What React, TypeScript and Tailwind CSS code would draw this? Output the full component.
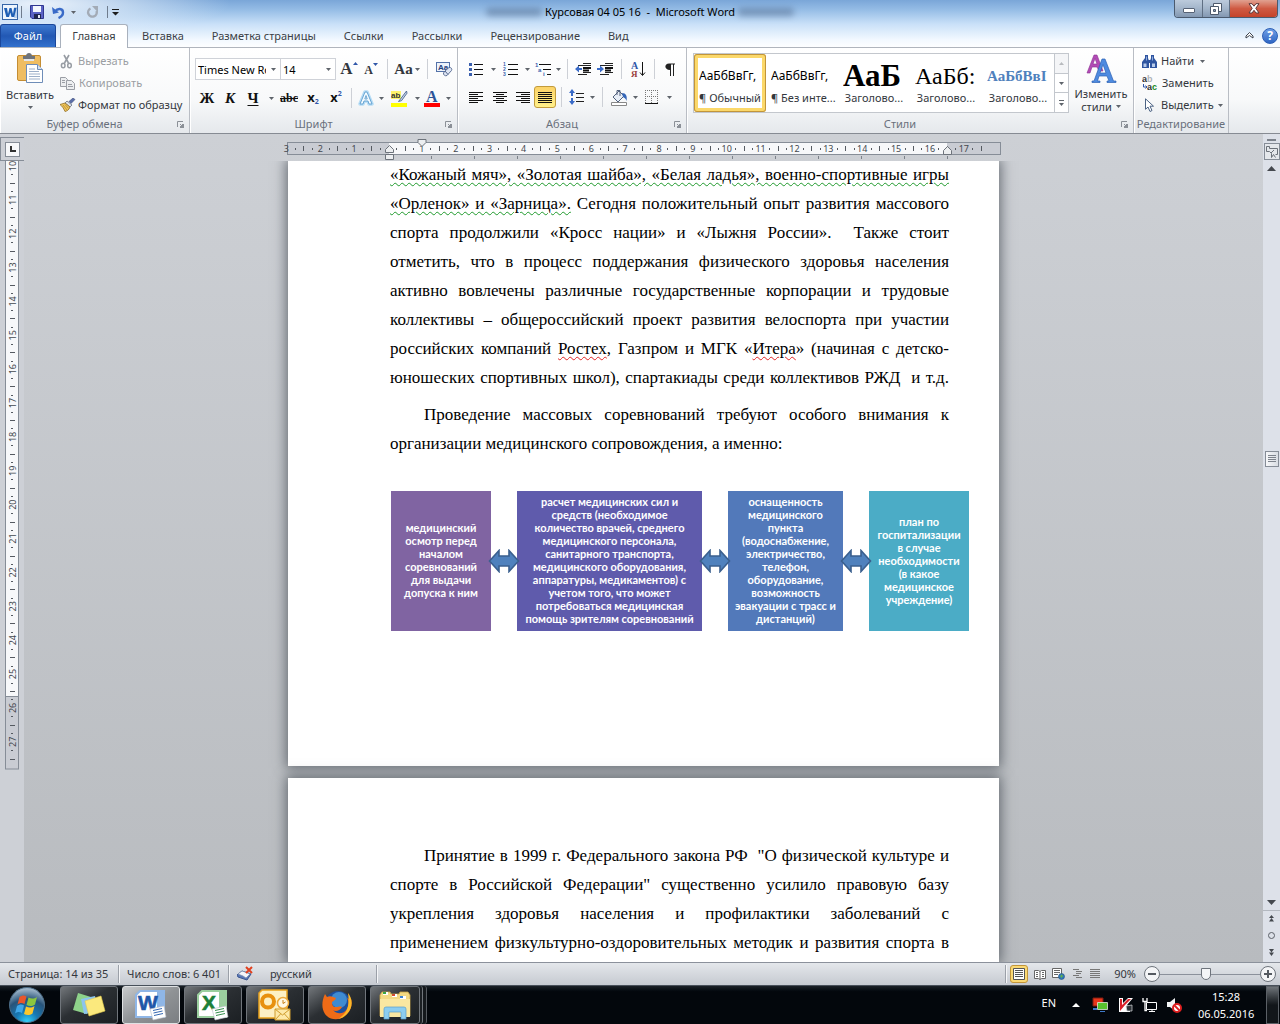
import type { ReactNode } from "react";
import clsx from "clsx";

const UNIT = 33.87;

/* ---------- small shared pieces ---------- */

function Caret({ className }: { className?: string }) {
  return (
    <svg width="5" height="3" viewBox="0 0 5 3" className={clsx("shrink-0", className)} aria-hidden>
      <path d="M0 0h5L2.5 3z" fill="#5f646b" />
    </svg>
  );
}

function Tool({ label, className, children }: { label: string; className: string; children: ReactNode }) {
  return (
    <button type="button" aria-label={label} className={clsx("flex h-5 shrink-0 items-center justify-center", className)}>
      {children}
    </button>
  );
}

function Drop({ label, className = "w-2.5" }: { label: string; className?: string }) {
  return (
    <Tool label={label} className={className}>
      <Caret />
    </Tool>
  );
}

function Sep({ className = "w-2.5" }: { className?: string }) {
  return (
    <div className={clsx("flex h-5 shrink-0 justify-center", className)}>
      <div className="w-px bg-[#cdd0d6]" />
    </div>
  );
}

function Group({ title, className, launcher = true, children }: { title: string; className: string; launcher?: boolean; children: ReactNode }) {
  return (
    <section className={clsx("flex shrink-0 flex-col border-r border-[#b9bdc4] shadow-[inset_1px_0_0_#fff]", className)}>
      <div className="min-h-0 flex-1">{children}</div>
      <div className={clsx("relative h-[18px] text-center leading-[18px] text-[#69707c]", launcher && "pr-5")}>
        {title}
        {launcher && (
          <button type="button" aria-label={`${title}: параметры`} className="absolute right-1 top-1.5">
            <svg width="8" height="8" viewBox="0 0 8 8" fill="none" stroke="#8b9097">
              <path d="M.5 6V.5H6M3 3l3 3" />
              <path d="M7 3v4H3V5h2V3z" fill="#8b9097" stroke="none" />
            </svg>
          </button>
        )}
      </div>
    </section>
  );
}

/* ---------- title bar ---------- */

function WordLogo() {
  return (
    <svg width="17" height="17" viewBox="0 0 17 17" aria-hidden>
      <rect x=".5" y=".5" width="15" height="15" fill="#eef5fd" stroke="#3565a8" />
      <path d="M12 3h3v11h-3z" fill="#bcd3ee" />
      <path d="M2 4h3l1 6 1.5-6h2L11 10l1-6h2.500l-2.300 9h-2.700L8.300 8.500 7 13H4.300z" fill="#1f5fb4" />
    </svg>
  );
}

function TitleBar() {
  return (
    <div className="relative flex h-6 items-center">
      <div className="flex items-center pl-0.5">
        <WordLogo />
        <div className="ml-0.5 h-3 w-px bg-[#6f7c8d]" />
        <button type="button" aria-label="Сохранить" className="ml-2">
          <svg width="14" height="14" viewBox="0 0 14 14">
            <path d="M.5.5h13v13H2L.500 12z" fill="#5b63c4" stroke="#2f3690" />
            <path d="M3 1h8v6H3z" fill="#f4f7fd" />
            <path d="M4 9h7v5H4z" fill="#20264f" />
            <path d="M8 10h2v3H8z" fill="#e6e9f5" />
          </svg>
        </button>
        <button type="button" aria-label="Отменить" className="ml-2">
          <svg width="13" height="13" viewBox="0 0 13 13" fill="none">
            <path d="M3 5.500C5.500 2 11 2 11 6.500 11 9.500 9 11 6.500 12" stroke="#3a6bc8" strokeWidth="2.400" />
            <path d="M0 1l1 7 6-1.500z" fill="#3a6bc8" />
          </svg>
        </button>
        <button type="button" aria-label="Список отмены" className="ml-1.5">
          <Caret />
        </button>
        <button type="button" aria-label="Вернуть" className="ml-2.5">
          <svg width="13" height="13" viewBox="0 0 13 13" fill="none">
            <path d="M4.500 2.500A4.300 4.300 0 1 0 10.500 5" stroke="#a3abb6" strokeWidth="2.400" />
            <path d="M6 0h6v6.500z" fill="#a3abb6" />
          </svg>
        </button>
        <div className="ml-2 h-3 w-px bg-[#6f7c8d]" />
        <button type="button" aria-label="Настройка панели" className="ml-1">
          <svg width="7" height="7" viewBox="0 0 7 7">
            <path d="M0 0h7v1H0zM0 3h7L3.500 6.500z" fill="#1d1d1d" />
          </svg>
        </button>
      </div>
      <div className="absolute inset-x-0 top-0 flex h-6 justify-between px-[38%]" aria-hidden>
        <div className="mt-2 h-2 w-14 rounded bg-[#4a6487]/50 blur-[3px]" />
        <div className="mt-2 h-2 w-14 rounded bg-[#4a6487]/50 blur-[3px]" />
      </div>
      <div className="absolute inset-x-0 top-0 flex h-6 justify-center">
        <div className="text-[11px] leading-6 whitespace-pre text-black">Курсовая 04 05 16  -  Microsoft Word</div>
      </div>
      <div className="absolute right-0.5 top-0 flex h-[18px] overflow-hidden rounded-b-[4px] border border-t-0 border-[#4a5a6e]">
        <button type="button" aria-label="Свернуть" className="flex w-7 items-center justify-center border-r border-[#5f6f83] bg-linear-to-b from-[#bccbdc] via-[#a3b5ca] via-50% to-[#8398b2]">
          <svg width="12" height="5" viewBox="0 0 12 5" className="mt-1">
            <rect x=".5" y=".5" width="11" height="4" rx=".5" fill="#fff" stroke="#566275" />
          </svg>
        </button>
        <button type="button" aria-label="Восстановить" className="flex w-[27px] items-center justify-center border-r border-[#5f6f83] bg-linear-to-b from-[#bccbdc] via-[#a3b5ca] via-50% to-[#8398b2]">
          <svg width="12" height="12" viewBox="0 0 12 12" fill="#fff" stroke="#4d5a6c">
            <path d="M3.500.500h8v8h-8z" />
            <path d="M.500 3.500h8v8h-8z" />
            <path d="M3.500 6.500h2v2h-2z" fill="#8ea0b6" />
          </svg>
        </button>
        <button type="button" aria-label="Закрыть" className="flex w-[47px] items-center justify-center bg-linear-to-b from-[#e0a191] via-[#cf5a43] via-50% to-[#c4432a]">
          <svg width="12" height="11" viewBox="0 0 12 11">
            <path d="M1 .700h3l2 2.500L8 .700h3L7.800 5.300 11 10H8L6 7.300 4 10H1l3.200-4.700z" fill="#fff" stroke="#5c3a3c" />
          </svg>
        </button>
      </div>
    </div>
  );
}

const tabs = ["Вставка", "Разметка страницы", "Ссылки", "Рассылки", "Рецензирование", "Вид"];

function Tabs() {
  return (
    <nav className="flex h-[23px] items-end text-[11px] text-[#3b3f46]">
      <button type="button" className="h-[23px] w-14 rounded-t-[3px] border border-b-0 border-[#1a479b] bg-linear-to-b from-[#3f7ad0] via-[#2258b4] to-[#3271cd] text-white">
        Файл
      </button>
      <button type="button" className="relative z-10 -mb-px ml-1 h-6 w-[68px] rounded-t-[3px] border border-b-0 border-[#a9b1bd] bg-white">
        Главная
      </button>
      {tabs.map((t) => (
        <button key={t} type="button" className="h-[23px] px-3.5 pt-0.5">
          {t}
        </button>
      ))}
      <div className="ml-auto flex h-[23px] items-center gap-2 pr-0.5">
        <button type="button" aria-label="Свернуть ленту">
          <svg width="9" height="7" viewBox="0 0 9 7" fill="none" stroke="#3d434c">
            <path d="M1 4l3.500-3.500L8 4v2L4.500 3.500 1 6z" fill="#fff" />
          </svg>
        </button>
        <button type="button" aria-label="Справка" className="flex size-4 items-center justify-center rounded-full border border-[#2c5fb5] bg-linear-to-b from-[#6f9fe6] to-[#2f66c4] text-[12px] leading-none font-bold text-white">
          ?
        </button>
      </div>
    </nav>
  );
}

/* ---------- ribbon ---------- */

function ClipboardGroup() {
  return (
    <Group title="Буфер обмена" className="w-[190px]">
      <div className="flex">
        <button type="button" className="flex w-[60px] flex-col items-center pt-1">
          <svg width="28" height="32" viewBox="0 0 28 32">
            <rect x="1.500" y="3.500" width="23" height="25" rx="1.500" fill="#efbd62" stroke="#c48d33" />
            <path d="M7 7V4h3c0-4 6-4 6 0h3v3z" fill="#6f747b" />
            <path d="M8 7h10v2H8z" fill="#e3e6ea" />
            <path d="M10.500 12.500h11l5 5v13h-16z" fill="#fff" stroke="#6e8db8" />
            <path d="M21.500 12.500v5h5" fill="#d6e2f1" stroke="#6e8db8" />
            <path d="M13 17h6M13 19.500h10M13 22h11M13 24.500h11M13 27h11" stroke="#9cafc9" />
          </svg>
          <span className="mt-1 leading-[14px]">Вставить</span>
          <Caret className="mt-1" />
        </button>
        <div className="flex flex-col pt-0.5">
          <button type="button" className="flex h-[22px] items-center gap-1 text-[#9b9ea3]">
            <svg width="13" height="15" viewBox="0 0 13 15" fill="none" stroke="#979ca3" className="mr-px">
              <path d="M4 1l4.500 8M9 1L4.500 9" strokeWidth="1.600" />
              <ellipse cx="3.200" cy="11.500" rx="1.800" ry="2.300" strokeWidth="1.500" />
              <ellipse cx="9.500" cy="11.500" rx="1.800" ry="2.300" strokeWidth="1.500" />
            </svg>
            Вырезать
          </button>
          <button type="button" className="flex h-[22px] items-center gap-1 text-[#9b9ea3]">
            <svg width="15" height="13" viewBox="0 0 15 13" fill="#eceef0" stroke="#9a9ea5">
              <path d="M.500.500h5l2 2v7h-7z" />
              <path d="M6.500 3.500h5l3 3v6h-8z" />
              <path d="M2 3.500h3M2 5.500h3M8 7.500h4M8 9.500h5" />
            </svg>
            Копировать
          </button>
          <button type="button" className="flex h-[22px] items-center gap-0.5">
            <svg width="16" height="14" viewBox="0 0 16 14">
              <path d="M13 0l2 1.500-4 4-2-2z" fill="#5b6ea8" stroke="#3d4b78" strokeWidth=".6" />
              <path d="M7 3l5 4-2 2-5-4z" fill="#dfe4ec" stroke="#586277" strokeWidth=".7" />
              <path d="M0 6.500L5 5l5 4c-1 3-3 4-5 4.500C3.500 10 2 8 0 6.500z" fill="#efc55a" stroke="#92702a" strokeWidth=".8" />
              <path d="M3 7l4 5M5 6.500l3.500 4" stroke="#b48a35" strokeWidth=".8" />
            </svg>
            Формат по образцу
          </button>
        </div>
      </div>
    </Group>
  );
}

function ComboBox({ label, value, className }: { label: string; value: string; className: string }) {
  return (
    <div className={clsx("flex h-[22px] items-center border border-[#cfd2d8] bg-white", className)}>
      <input aria-label={label} defaultValue={value} className="h-5 min-w-0 flex-1 pl-0.5 text-[11px] text-black outline-none" />
      <Drop label={`${label}: список`} className="w-[14px]" />
    </div>
  );
}

function FontGroup() {
  return (
    <Group title="Шрифт" className="w-[268px]">
      <div className="flex items-center pl-[5px] pt-2.5">
        <ComboBox label="Шрифт" value="Times New Roman" className="w-[86px]" />
        <ComboBox label="Размер шрифта" value="14" className="-ml-px mr-0.5 w-14" />
        <Tool label="Увеличить размер" className="w-[22px] font-['Liberation_Serif'] text-[17px] font-bold">
          А
          <svg width="5" height="3" viewBox="0 0 5 3" className="mb-3">
            <path d="M2.500 0L5 3H0z" fill="#2f56a8" />
          </svg>
        </Tool>
        <Tool label="Уменьшить размер" className="w-[22px] pt-0.5 font-['Liberation_Serif'] text-[12px] font-bold">
          А
          <svg width="5" height="3" viewBox="0 0 5 3" className="mb-3">
            <path d="M2.500 3L5 0H0z" fill="#2f56a8" />
          </svg>
        </Tool>
        <Sep />
        <Tool label="Регистр" className="w-[30px] gap-0.5 font-['Liberation_Serif'] text-[15px] font-bold">
          Aa
          <Caret />
        </Tool>
        <Sep />
        <Tool label="Очистить формат" className="w-6">
          <svg width="17" height="17" viewBox="0 0 17 17">
            <rect x=".5" y="1.500" width="13" height="9" fill="#eef3fb" stroke="#5472a8" />
            <text x="2" y="9" fontFamily="Liberation Sans" fontSize="8" fontWeight="700" fill="#24417c">Aa</text>
            <path d="M9 10l4-3.500c2-.500 3.500 1.500 2.500 3L11 14.500c-2 1-4-1-3.500-2.500z" fill="#dfe6f4" stroke="#51648c" strokeWidth=".9" />
            <path d="M9 10l3 3.500" stroke="#51648c" />
          </svg>
        </Tool>
      </div>
      <div className="flex items-center pl-[5px] pt-2 font-['Liberation_Serif'] text-[15px] font-bold text-[#111]">
        <Tool label="Полужирный" className="w-6">Ж</Tool>
        <Tool label="Курсив" className="w-[22px] italic">К</Tool>
        <Tool label="Подчёркнутый" className="w-6 underline underline-offset-2">Ч</Tool>
        <Drop label="Вид подчёркивания" className="w-3" />
        <Tool label="Зачёркнутый" className="w-6 text-[12px] line-through">abc</Tool>
        <Tool label="Подстрочный" className="w-6 font-['Noto_Sans'] text-[13px]">
          x<span className="mt-2 text-[7px] text-[#2f56a8]">2</span>
        </Tool>
        <Tool label="Надстрочный" className="w-[22px] font-['Noto_Sans'] text-[13px]">
          x<span className="mb-2 text-[7px] text-[#2f56a8]">2</span>
        </Tool>
        <Sep className="w-2" />
        <Tool label="Эффекты текста" className="w-[22px]">
          <svg width="16" height="16" viewBox="0 0 16 16" fill="none" strokeLinejoin="round">
            <path d="M2 14L7 2h2l5 12h-3l-1-3H6l-1 3z" stroke="#b6dcf5" strokeWidth="3.500" />
            <path d="M2 14L7 2h2l5 12h-3l-1-3H6l-1 3zM6.800 9h2.400L8 5.500z" fill="#f4fbff" stroke="#5d9dce" strokeWidth=".9" />
          </svg>
        </Tool>
        <Drop label="Эффекты: список" className="w-2" />
        <Tool label="Цвет выделения" className="w-[28px]">
          <svg width="17" height="17" viewBox="0 0 17 17">
            <path d="M0 1h10v8H0z" fill="#fff36b" />
            <text x="0" y="8" fontFamily="Liberation Sans" fontSize="8" fontWeight="700" fill="#333">ab</text>
            <path d="M15.500 1L9.500 9l-2 2.500 3-.8 5.500-7.500z" fill="#c9d6ea" stroke="#4a648f" strokeWidth=".9" />
            <path d="M0 13h16v4H0z" fill="#ff0" />
          </svg>
        </Tool>
        <Drop label="Цвет выделения: список" className="w-2" />
        <Tool label="Цвет текста" className="w-[22px]">
          <svg width="16" height="19" viewBox="0 0 16 19">
            <text x="2" y="13" fontFamily="Liberation Serif" fontSize="16" fontWeight="700" fill="#2c5498">A</text>
            <path d="M0 14h16v4H0z" fill="#f00" />
          </svg>
        </Tool>
        <Drop label="Цвет текста: список" />
      </div>
    </Group>
  );
}

function Lines({ rows }: { rows: number[][] }) {
  return (
    <svg width="14" height="13" viewBox="0 0 14 13" fill="#111" aria-hidden>
      {rows.map(([x, w], i) => (
        <rect key={i} x={x} y={i * 2 + 1} width={w} height="1" />
      ))}
    </svg>
  );
}

const alignLeft = [[0, 14], [0, 9], [0, 14], [0, 9], [0, 14], [0, 9]];
const alignCenter = [[0, 14], [3, 8], [0, 14], [3, 8], [0, 14], [3, 8]];
const alignRight = [[0, 14], [5, 9], [0, 14], [5, 9], [0, 14], [5, 9]];
const alignFull = [[0, 14], [0, 14], [0, 14], [0, 14], [0, 14], [0, 14]];

function IndentIcon({ right }: { right?: boolean }) {
  return (
    <svg width="17" height="14" viewBox="0 0 17 14" aria-hidden>
      <path d="M8 1.500h8M3 3.500h13M8 10.500h8M3 12.500h9" stroke="#222" />
      <path d="M8 6h8M8 8.500h6" stroke="#111" strokeWidth="2" />
      <path d={right ? "M0 6h3V3.500L7 7l-4 3.500V8H0z" : "M7 6H4V3.500L0 7l4 3.500V8h3z"} fill="#3a6bc8" />
    </svg>
  );
}

function ParagraphGroup() {
  return (
    <Group title="Абзац" className="w-[229px]">
      <div className="flex items-center pl-1.5 pt-[11px]">
        <Tool label="Маркеры" className="w-6">
          <svg width="14" height="14" viewBox="0 0 14 14">
            <path d="M5 2.500h9M5 7.500h9M5 12.500h9" stroke="#111" />
            <path d="M0 1h3v3H0zM0 6h3v3H0zM0 11h3v3H0z" fill="#3a5fae" />
          </svg>
        </Tool>
        <Drop label="Маркеры: список" />
        <Tool label="Нумерация" className="w-6">
          <svg width="15" height="16" viewBox="0 0 15 16">
            <path d="M5 3.500h10M5 8.500h10M5 13.500h10" stroke="#111" />
            <g fontFamily="Liberation Sans" fontSize="5" fontWeight="700" fill="#3a5fae">
              <text x="0" y="5">1</text>
              <text x="0" y="10">2</text>
              <text x="0" y="15">3</text>
            </g>
          </svg>
        </Tool>
        <Drop label="Нумерация: список" />
        <Tool label="Многоуровневый список" className="w-[22px]">
          <svg width="17" height="17" viewBox="0 0 17 17">
            <path d="M4 3.500h12M8 8.500h8M12 13.500h4" stroke="#111" />
            <g fontFamily="Liberation Sans" fontSize="6" fontWeight="700" fill="#3a5fae">
              <text x="0" y="6">1</text>
              <text x="3" y="11">a</text>
              <text x="8" y="15">i</text>
            </g>
          </svg>
        </Tool>
        <Drop label="Многоуровневый: список" className="w-2" />
        <Sep />
        <Tool label="Уменьшить отступ" className="w-[22px]">
          <IndentIcon />
        </Tool>
        <Tool label="Увеличить отступ" className="w-[22px]">
          <IndentIcon right />
        </Tool>
        <Sep />
        <Tool label="Сортировка" className="w-6">
          <svg width="15" height="19" viewBox="0 0 15 19">
            <text x="0" y="9" fontFamily="Liberation Serif" fontSize="10" fontWeight="700" fill="#2f56a8">А</text>
            <text x="0" y="17" fontFamily="Liberation Serif" fontSize="9" fontWeight="700" fill="#9a3c3c">Я</text>
            <path d="M11.500 2v13M9 12.500l2.500 3 2.500-3" stroke="#111" fill="none" />
          </svg>
        </Tool>
        <Sep className="w-2" />
        <Tool label="Непечатаемые знаки" className="w-6">
          <svg width="10" height="13" viewBox="0 0 10 13">
            <path d="M4 .500h6v1H9V13H8V1.500H6V13H5V7C-1 7-1 .500 4 .500z" fill="#222" />
          </svg>
        </Tool>
      </div>
      <div className="flex items-center pl-1.5 pt-2">
        <Tool label="По левому краю" className="w-6"><Lines rows={alignLeft} /></Tool>
        <Tool label="По центру" className="w-6"><Lines rows={alignCenter} /></Tool>
        <Tool label="По правому краю" className="w-[22px]"><Lines rows={alignRight} /></Tool>
        <button type="button" aria-label="По ширине" aria-pressed className="-my-px flex h-[22px] w-[22px] items-center justify-center rounded-[3px] border border-[#c29b3b] bg-linear-to-b from-[#fcd367] to-[#fff08a]">
          <Lines rows={alignFull} />
        </button>
        <Sep />
        <Tool label="Интервал" className="w-[22px]">
          <svg width="16" height="16" viewBox="0 0 16 16">
            <path d="M3 0l3 4H4v8h2l-3 4-3-4h2V4H0z" fill="#3a6bc8" />
            <path d="M0 7h6v2H0z" fill="#fafbfc" />
            <path d="M7 4.500h8M7 8.500h8M7 12.500h8" stroke="#222" />
          </svg>
        </Tool>
        <Drop label="Интервал: список" className="w-2" />
        <Sep className="w-3" />
        <Tool label="Заливка" className="w-[22px]">
          <svg width="17" height="17" viewBox="0 0 17 17">
            <path d="M2 8l6-6 5 5-6 6z" fill="#e7edf6" stroke="#52617c" />
            <path d="M6 6V1.500h3V7" fill="none" stroke="#52617c" />
            <path d="M11 4c4 0 5.500 3 4.500 8-1-3-2-3-3.500-4z" fill="#3566b8" />
            <path d="M.500 13.500h15v3H.500z" fill="#fff" stroke="#888" />
          </svg>
        </Tool>
        <Drop label="Заливка: список" />
        <Tool label="Границы" className="w-6">
          <svg width="14" height="14" viewBox="0 0 14 14" fill="none">
            <path d="M.500 0v13M6.500 0v13M12.500 0v13M0 .500h13M0 6.500h13" stroke="#777" strokeDasharray="1 1" />
            <path d="M0 13.500h13" stroke="#111" />
          </svg>
        </Tool>
        <Drop label="Границы: список" />
      </div>
    </Group>
  );
}

const styleCards = [
  { sample: "АаБбВвГг,", name: "¶ Обычный", look: "text-[12px] text-black", active: true },
  { sample: "АаБбВвГг,", name: "¶ Без инте...", look: "text-[12px] text-black" },
  { sample: "АаБ", name: "Заголово...", look: "font-['Liberation_Serif'] text-[31px] font-bold text-black" },
  { sample: "АаБб:", name: "Заголово...", look: "font-['Liberation_Serif'] text-[24px] text-black" },
  { sample: "АаБбВвІ", name: "Заголово...", look: "font-['Liberation_Serif'] text-[15px] font-bold text-[#4f81bd]" },
];

function StylesGroup() {
  return (
    <Group title="Стили" className="w-[447px]">
      <div className="flex pl-1.5 pt-[5px]">
        <div className="flex h-[60px] border border-[#c3c7cd] bg-white">
          {styleCards.map((c, i) => (
            <button
              key={i}
              type="button"
              className={clsx(
                "flex w-[72px] flex-col overflow-hidden px-[5px]",
                c.active && "rounded-[3px] shadow-[inset_0_0_0_1px_#c2953a,inset_0_0_0_4px_#fbd86a]",
              )}
            >
              <span className={clsx("flex h-9 w-[60px] items-center overflow-hidden pt-2 leading-7 whitespace-nowrap", c.look)}>{c.sample}</span>
              <span className="leading-4 whitespace-nowrap">{c.name}</span>
            </button>
          ))}
          <div className="flex w-[14px] flex-col border-l border-[#c3c7cd]">
            <button type="button" aria-label="Вверх" className="flex flex-1 items-center justify-center bg-[#f4f5f7]">
              <Caret className="rotate-180 opacity-40" />
            </button>
            <button type="button" aria-label="Вниз" className="flex flex-1 items-center justify-center border-y border-[#c3c7cd]">
              <Caret />
            </button>
            <button type="button" aria-label="Все стили" className="flex flex-1 flex-col items-center justify-center gap-0.5">
              <span className="h-px w-[5px] bg-[#5f646b]" />
              <Caret />
            </button>
          </div>
        </div>
        <button type="button" className="flex w-16 flex-col items-center leading-[13px]">
          <svg width="31" height="30" viewBox="0 0 31 30">
            <path d="M1 20L8 2h3l6 16h-4l-2-4H6l-2 6zM7 11h4L9 5.500z" fill="#b24bb5" stroke="#8a2f90" strokeWidth=".6" />
            <path d="M6 28h2l8-22h3l8.500 22H30v1.500h-9V28h2l-2-5h-8l-1.500 5H14v1.500H6zM14 20h6l-3-8.500z" fill="#4e8be0" stroke="#2c62b5" strokeWidth=".7" />
          </svg>
          <span className="mt-1">Изменить</span>
          <span className="flex items-center gap-1">
            стили <Caret />
          </span>
        </button>
      </div>
    </Group>
  );
}

function EditingGroup() {
  return (
    <Group title="Редактирование" className="w-[95px]" launcher={false}>
      <div className="flex flex-col pl-2 pt-0.5">
        <button type="button" className="flex h-[22px] items-center gap-1">
          <svg width="15" height="13" viewBox="0 0 15 13" fill="#2f55a0" aria-hidden>
            <path d="M3 0h3v3l1 3v7H0V7l3-4zM9 0h3v3l3 4v6H8V6l1-3z" />
            <path d="M6 5h3v3H6z" />
            <path d="M1.500 8.500h3V12h-3zM10 8.500h3V12h-3z" fill="#b8cbea" />
            <path d="M4 1.500h1v4H4zM10 1.500h1v4h-1z" fill="#8fabdc" />
          </svg>
          Найти <Caret className="ml-0.5" />
        </button>
        <button type="button" className="flex h-[22px] items-center gap-1">
          <svg width="16" height="20" viewBox="0 0 16 20" fontFamily="Liberation Sans" fontSize="9" fontWeight="700" aria-hidden>
            <text x="0" y="9" fill="#333">a</text>
            <text x="5" y="9" fill="#b0b3b8">b</text>
            <text x="5" y="17" fill="#333">a</text>
            <text x="10" y="17" fill="#188a1d">c</text>
            <path d="M1.500 11v3H5M3.500 12.500L5 14l-1.500 1.500" fill="none" stroke="#2f56a8" />
          </svg>
          Заменить
        </button>
        <button type="button" className="flex h-[22px] items-center gap-1">
          <svg width="15" height="14" viewBox="0 0 15 14" aria-hidden>
            <path d="M3.500.800v10.500l2.500-2.300 2 4.500 2-1-2-4.300h3.500z" fill="#fff" stroke="#4c6384" />
          </svg>
          Выделить <Caret />
        </button>
      </div>
    </Group>
  );
}

/* ---------- rulers ---------- */

function HorizontalRuler() {
  const zero = 101;
  const steps = Array.from({ length: 83 }, (_, i) => i - 12).filter((q) => zero + (q * UNIT) / 4 < 706);
  const tabStops = Array.from({ length: 13 }, (_, i) => zero + (i + 1) * 43);
  return (
    <svg width="714" height="27" viewBox="0 0 714 27" className="mx-auto block shrink-0 overflow-visible" aria-label="Линейка">
      <rect x=".5" y="8.500" width="713" height="12" fill="#c9ccd3" stroke="#868d97" />
      <rect x={zero + 1} y="9" width="558" height="11" fill="#f7f8fa" />
      {steps.map((q) => {
        const x = zero + (q * UNIT) / 4;
        if (q === 0) return null;
        if (q % 4 === 0)
          return (
            <text key={q} x={x} y="18" textAnchor="middle" fontFamily="Noto Sans" fontSize="9" fill="#44484f">
              {Math.abs(q / 4)}
            </text>
          );
        const tall = q % 2 === 0;
        return <rect key={q} x={Math.round(x)} y={tall ? 12 : 14} width="1" height={tall ? 5 : 2} fill="#555a61" />;
      })}
      {tabStops.map((x) => (
        <rect key={x} x={x} y="22" width="1" height="3" fill="#7c828a" />
      ))}
      <g fill="#eceef0" stroke="#6d737b">
        <path d="M131 5.500h8v3l-4 4-4-4z" />
        <path d="M98.500 18.500v-3l4-4 4 4v3zM98.500 20.500h8v5h-8z" />
        <path d="M656.500 20.500v-4l4-4 4 4v4z" />
      </g>
    </svg>
  );
}

function VerticalRuler() {
  const steps = Array.from({ length: 71 }, (_, i) => i);
  return (
    <svg width="15" height="609" viewBox="0 0 15 609" className="mx-auto block shrink-0" aria-label="Вертикальная линейка">
      <rect x=".5" y="-1" width="13" height="609" fill="#c9ccd3" stroke="#868d97" />
      <rect x="1" y="0" width="12" height="535" fill="#f7f8fa" />
      <path d="M0 535.500h14" stroke="#868d97" />
      {steps.map((q) => {
        const y = 5 + (q * UNIT) / 4;
        if (q % 4 === 0)
          return (
            <text key={q} transform={`translate(11 ${y}) rotate(-90)`} textAnchor="middle" fontFamily="Noto Sans" fontSize="9" fill="#44484f">
              {10 + q / 4}
            </text>
          );
        const wide = q % 2 === 0;
        return <rect key={q} x={wide ? 5 : 6} y={Math.round(y)} width={wide ? 5 : 2} height="1" fill="#555a61" />;
      })}
    </svg>
  );
}

/* ---------- document ---------- */

const green = "underline decoration-[#1f9a2c] decoration-wavy decoration-1 underline-offset-2";
const red = "underline decoration-[#e02424] decoration-wavy decoration-1 underline-offset-2";

function Line({ children, indent, natural }: { children: ReactNode; indent?: boolean; natural?: boolean }) {
  return <span className={clsx("block whitespace-nowrap", !natural && "[text-align-last:justify]", indent && "pl-[34px]")}>{children}</span>;
}

function ArrowBoth() {
  return (
    <svg width="32" height="24" viewBox="0 0 32 24" className="relative -mx-[3px] shrink-0" aria-hidden>
      <path d="M1.500 12L11 1.500v5.500h10V1.500L30.500 12 21 22.500V17H11v5.500z" fill="#4f81bd" stroke="#3a5f8e" strokeWidth="1.600" />
    </svg>
  );
}

function Step({ lines, className }: { lines: string[]; className: string }) {
  return (
    <div className={clsx("flex h-[140px] shrink-0 flex-col justify-center pb-0.5 text-center whitespace-nowrap", className)}>
      {lines.map((l) => (
        <span key={l} className="flex justify-center">{l}</span>
      ))}
    </div>
  );
}

function Scheme() {
  return (
    <div className="mt-[33px] flex items-center pl-px font-['Lato'] text-[11px] leading-[13px] font-bold text-white">
      <Step className="w-[100px] bg-[#8064a2]" lines={["медицинский", "осмотр перед", "началом", "соревнований", "для выдачи", "допуска к ним"]} />
      <ArrowBoth />
      <Step
        className="w-[185px] bg-[#5f5bac]"
        lines={[
          "расчет медицинских сил и",
          "средств (необходимое",
          "количество врачей, среднего",
          "медицинского персонала,",
          "санитарного транспорта,",
          "медицинского оборудования,",
          "аппаратуры, медикаментов) с",
          "учетом того, что может",
          "потребоваться медицинская",
          "помощь зрителям соревнований",
        ]}
      />
      <ArrowBoth />
      <Step
        className="w-[115px] bg-[#5279ba]"
        lines={["оснащенность", "медицинского", "пункта", "(водоснабжение,", "электричество,", "телефон,", "оборудование,", "возможность", "эвакуации с трасс и", "дистанций)"]}
      />
      <ArrowBoth />
      <Step className="w-[100px] bg-[#4bacc6]" lines={["план по", "госпитализации", "в случае", "необходимости", "(в какое", "медицинское", "учреждение)"]} />
    </div>
  );
}

function Document() {
  const sheet = "mx-auto w-[711px] bg-white pl-[102px] pr-[50px] shadow-[0_0_12px_2px_rgba(70,76,84,0.75)]";
  return (
    <div className="flex min-h-0 flex-1 flex-col gap-3 overflow-hidden font-['Liberation_Serif'] text-[17px] leading-[29px] text-black">
      <article className={clsx(sheet, "shrink-0 pb-[135px]")}>
        <p className="-mt-px">
          <Line><span className={green}>«Кожаный мяч», «Золотая шайба», «Белая ладья», военно-спортивные игры</span></Line>
          <Line><span className={green}>«Орленок» и «Зарница».</span> Сегодня положительный опыт развития массового</Line>
          <Line>спорта продолжили «Кросс нации» и «Лыжня России».&nbsp; Также стоит</Line>
          <Line>отметить, что в процесс поддержания физического здоровья населения</Line>
          <Line>активно вовлечены различные государственные корпорации и трудовые</Line>
          <Line>коллективы – общероссийский проект развития велоспорта при участии</Line>
          <Line>российских компаний <span className={red}>Ростех</span>, Газпром и МГК «<span className={red}>Итера</span>» (начиная с детско-</Line>
          <Line>юношеских спортивных школ), спартакиады среди коллективов РЖД&nbsp; и т.д.</Line>
        </p>
        <p className="mt-2">
          <Line indent>Проведение массовых соревнований требуют особого внимания к</Line>
          <Line natural>организации медицинского сопровождения, а именно:</Line>
        </p>
        <Scheme />
      </article>
      <article className={clsx(sheet, "min-h-0 flex-1 pt-[63px]")}>
        <p>
          <Line indent>Принятие в 1999 г. Федерального закона РФ&nbsp; "О физической культуре и</Line>
          <Line>спорте в Российской Федерации" существенно усилило правовую базу</Line>
          <Line>укрепления здоровья населения и профилактики заболеваний с</Line>
          <Line>применением физкультурно-оздоровительных методик и развития спорта в</Line>
        </p>
      </article>
    </div>
  );
}

function ScrollBar() {
  return (
    <div className="flex w-[17px] shrink-0 flex-col items-center bg-[#dde1e9]">
      <div className="mt-[5px] h-0.5 w-[9px] bg-[#7d838c]" />
      <button type="button" aria-label="Линейка" className="mt-0.5 flex h-[17px] w-4 items-center justify-center border border-[#868d97] bg-[#e4e7eb]">
        <svg width="12" height="12" viewBox="0 0 12 12" fill="none" stroke="#6b7179">
          <path d="M.500.500h3v2h8v6h-2M.500.500v5h3l2 2v4l2-3 2 3" />
          <path d="M8 4l-3 3" />
        </svg>
      </button>
      <button type="button" aria-label="Прокрутить вверх" className="mt-1.5">
        <svg width="9" height="5" viewBox="0 0 9 5"><path d="M4.500 0L9 5H0z" fill="#45494f" /></svg>
      </button>
      <div className="flex w-full flex-[295] items-end justify-center">
        <div className="flex h-4 w-[14px] items-center justify-center border border-[#868d97] bg-linear-to-r from-[#f6f7f9] to-[#d9dde3]">
          <svg width="8" height="7" viewBox="0 0 8 7"><path d="M0 .500h8M0 2.500h8M0 4.500h8M0 6.500h8" stroke="#7d838c" /></svg>
        </div>
      </div>
      <div className="flex-[432]" />
      <button type="button" aria-label="Прокрутить вниз">
        <svg width="9" height="5" viewBox="0 0 9 5"><path d="M0 0h9L4.500 5z" fill="#45494f" /></svg>
      </button>
      <div className="mt-[5px] h-px w-full bg-[#b3b8c0]" />
      <button type="button" aria-label="Предыдущая страница" className="mt-1">
        <svg width="5" height="7" viewBox="0 0 5 7"><path d="M2.500 0L5 3H0zM2.500 3L5 6.500H0z" fill="#45494f" /></svg>
      </button>
      <button type="button" aria-label="Выбор объекта" className="mt-2.5 size-[7px] rounded-full border border-[#5b6068]" />
      <button type="button" aria-label="Следующая страница" className="mt-2.5 mb-1.5">
        <svg width="5" height="7" viewBox="0 0 5 7"><path d="M0 0h5L2.500 3.500zM0 3.500h5L2.500 7z" fill="#45494f" /></svg>
      </button>
    </div>
  );
}

/* ---------- status bar ---------- */

function StatusSep({ className }: { className?: string }) {
  return <div className={clsx("h-[18px] w-px bg-[#9ba0a8] shadow-[1px_0_0_#f5f6f8]", className)} />;
}

function StatusBar() {
  return (
    <footer className="flex h-[23px] shrink-0 items-center border-t border-[#8b919b] bg-linear-to-b from-[#e4e7eb] to-[#c6cad1]">
      <span className="w-[110px] pl-2 whitespace-nowrap">Страница: 14 из 35</span>
      <StatusSep className="ml-2" />
      <span className="w-[101px] pl-2 whitespace-nowrap">Число слов: 6 401</span>
      <StatusSep className="ml-2" />
      <svg width="17" height="16" viewBox="0 0 17 16" className="ml-2" aria-hidden>
        <path d="M0 9l5-4 9 3-4 6-9-3z" fill="#5878b8" stroke="#3b5690" />
        <path d="M1 8l4-3 3 1 5 2-4 4-3-2z" fill="#f4f6fa" stroke="#7d8cab" strokeWidth=".7" />
        <path d="M9 1l6 6M15 1L9 7" stroke="#e0401f" strokeWidth="2" />
      </svg>
      <span className="ml-4">русский</span>
      <StatusSep className="ml-16" />
      <div className="ml-auto flex items-center">
        <StatusSep />
        <button type="button" aria-label="Разметка страницы" aria-pressed className="ml-1 flex size-[18px] items-center justify-center rounded-[3px] border border-[#c2953a] bg-[#fbd973]">
          <svg width="12" height="12" viewBox="0 0 12 12"><path d="M.500.500h11v11H.500z" fill="#fff" stroke="#555" /><path d="M2 2.500h8M2 4.500h8M2 6.500h8M2 8.500h8" stroke="#555" /></svg>
        </button>
        <button type="button" aria-label="Режим чтения" className="ml-1.5">
          <svg width="12" height="11" viewBox="0 0 12 11" fill="#fff" stroke="#666"><path d="M.500 1.500h4l1.500 1 1.500-1h4v8h-4L6 10.500l-1.500-1h-4zM6 2.500v8M2 3.500h2M2 5.500h2M2 7.500h2M8 3.500h2M8 5.500h2M8 7.500h2" /></svg>
        </button>
        <button type="button" aria-label="Веб-документ" className="ml-1.5">
          <svg width="13" height="12" viewBox="0 0 13 12"><path d="M.500.500h9v9h-9z" fill="#fff" stroke="#666" /><path d="M2 2.500h6M2 4.500h6M2 6.500h4" stroke="#666" /><circle cx="9.500" cy="8.500" r="3" fill="#2f78b8" stroke="#25527e" strokeWidth=".6" /><path d="M8 8l2-1.500 1 1.500-1.500 2z" fill="#63b24c" /></svg>
        </button>
        <button type="button" aria-label="Структура" className="ml-2">
          <svg width="9" height="10" viewBox="0 0 9 10" stroke="#777"><path d="M0 .500h6M3 2.500h6M3 4.500h5M0 6.500h6M3 8.500h6" /></svg>
        </button>
        <button type="button" aria-label="Черновик" className="ml-2">
          <svg width="10" height="10" viewBox="0 0 10 10" stroke="#777"><path d="M0 .500h10M0 2.500h10M0 4.500h10M0 6.500h10M0 8.500h10" /></svg>
        </button>
        <span className="ml-3 w-[26px] text-center">90%</span>
        <button type="button" aria-label="Уменьшить" className="ml-1.5 flex size-4 items-center justify-center rounded-full border border-[#6d737b] bg-[#f4f5f7]">
          <span className="h-0.5 w-2 bg-[#555a61]" />
        </button>
        <input
          type="range"
          aria-label="Масштаб"
          defaultValue={45}
          className="h-4 w-[100px] appearance-none bg-[linear-gradient(#8b919b,#8b919b)] bg-[length:100%_1px] bg-center bg-no-repeat [&::-webkit-slider-thumb]:h-3 [&::-webkit-slider-thumb]:w-2.5 [&::-webkit-slider-thumb]:appearance-none [&::-webkit-slider-thumb]:rounded-b-[5px] [&::-webkit-slider-thumb]:border [&::-webkit-slider-thumb]:border-[#6d737b] [&::-webkit-slider-thumb]:bg-[#f4f5f7]"
        />
        <button type="button" aria-label="Увеличить" className="mr-1 flex size-4 items-center justify-center rounded-full border border-[#6d737b] bg-[#f4f5f7]">
          <svg width="8" height="8" viewBox="0 0 8 8"><path d="M0 3h3V0h2v3h3v2H5v3H3V5H0z" fill="#555a61" /></svg>
        </button>
      </div>
    </footer>
  );
}

/* ---------- taskbar ---------- */

function TaskButton({ label, active, className = "w-[58px]", children }: { label: string; active?: boolean; className?: string; children: ReactNode }) {
  return (
    <button
      type="button"
      aria-label={label}
      className={clsx(
        "flex h-[38px] items-center justify-center rounded-[3px] border",
        active ? "border-[#dfe1e3] bg-linear-to-br from-[#c9cbcd] via-[#909396] to-[#7b7e82]" : "border-[#70757b] bg-linear-to-br from-[#73777b] via-[#2b2f33] via-45% to-[#1b1f23]",
        className,
      )}
    >
      {children}
    </button>
  );
}

function OfficeSheet({ letter, color, tint }: { letter: string; color: string; tint: string }) {
  return (
    <svg width="32" height="32" viewBox="0 0 32 32" aria-hidden>
      <path d="M5 2h24v26H1V6z" fill="#fff" stroke={tint} strokeWidth="2" />
      <path d="M22 3h6v20h-6z" fill={tint} />
      <text x={letter === "W" ? 3 : 5} y="21" fontFamily="Liberation Sans" fontSize="21" fontWeight="700" fill={color} stroke={color} strokeWidth=".6">
        {letter}
      </text>
      <path d="M15 20l14-3 2 11-13 3z" fill="#fff" stroke="#b8bec8" strokeWidth=".6" />
      <path d="M18 21.500l9-2M18.500 24l9-2M19 26.500l9-2" stroke={color} strokeWidth=".9" />
    </svg>
  );
}

function TaskBar() {
  return (
    <footer className="flex h-[39px] shrink-0 border-t border-[#48505a] bg-linear-to-b from-[#1b2127] to-[#03070c] to-15%">
      <button type="button" aria-label="Пуск" className="ml-[7px] mr-[13px] w-10">
        <svg width="40" height="38" viewBox="0 0 40 38">
          <defs>
            <radialGradient id="orb" cx=".5" cy="1" r=".95">
              <stop offset="0" stopColor="#35d7ff" />
              <stop offset=".35" stopColor="#1679b5" />
              <stop offset=".7" stopColor="#285379" />
              <stop offset="1" stopColor="#9db4c8" />
            </radialGradient>
          </defs>
          <circle cx="20" cy="19" r="17.500" fill="url(#orb)" stroke="#4b6c86" />
          <path d="M12.500 11c3-2 4.500-2 7-.5l-2 7.500c-2.500-1.500-4.500-1.500-7 .5z" fill="#e9562b" />
          <path d="M21.500 11.500c3 1.500 5.500 1.500 8.500-.5l-2 7.500c-3 2-5.500 2-8.500.5z" fill="#8cc63f" />
          <path d="M10 20c3-2 4.500-2 7-.5l-2 7.500c-2.500-1.500-4.500-1.500-7 .5z" fill="#3fa6e8" />
          <path d="M19 20.500c3 1.500 5.500 1.500 8.500-.5l-2 7.500c-3 2-5.500 2-8.500.5z" fill="#fcc72c" />
        </svg>
      </button>
      <div className="flex gap-1">
        <TaskButton label="Записки">
          <svg width="34" height="28" viewBox="0 0 34 28">
            <path d="M6 2l13 4-4 17-14-4z" fill="#8ed28a" />
            <path d="M9 8l14-3 3 16-14 2z" fill="#8cc4ee" />
            <path d="M13 10l16-5 4 15-16 5z" fill="#fbe97d" stroke="#e5cd4e" strokeWidth=".6" />
          </svg>
        </TaskButton>
        <TaskButton label="Microsoft Word" active>
          <OfficeSheet letter="W" color="#1f57a8" tint="#8fb6e6" />
        </TaskButton>
        <TaskButton label="Microsoft Excel">
          <OfficeSheet letter="X" color="#1d8039" tint="#9bcf9f" />
        </TaskButton>
        <TaskButton label="Microsoft Outlook">
          <svg width="34" height="34" viewBox="0 0 34 34">
            <path d="M4 2h25v28H1V5z" fill="#fdf0c4" stroke="#e9a21c" strokeWidth="1.500" />
            <circle cx="10" cy="13.500" r="6" fill="none" stroke="#e8900f" strokeWidth="4" />
            <circle cx="25" cy="15" r="5.500" fill="#fff8e4" stroke="#eda93a" strokeWidth="1.500" />
            <path d="M25 12v3.500l2.500-1.500" fill="none" stroke="#c87c14" />
            <path d="M17 21h15v11H17z" fill="#fde9a8" stroke="#cf9c2c" />
            <path d="M17 21l7.500 6L32 21M17 32l5.500-6M32 32l-5.500-6" fill="none" stroke="#cf9c2c" />
          </svg>
        </TaskButton>
        <TaskButton label="Firefox">
          <svg width="32" height="32" viewBox="0 0 32 32">
            <circle cx="17" cy="15" r="13" fill="#1d4f9c" />
            <circle cx="18" cy="11" r="8" fill="#3f8bd1" />
            <path d="M27 4c5 6 5 15-1 21-6 7-17 7-22 0C0 19 1 11 4 5l2 3c2-1 4-1 6 0l3 1c-1 3-3 3-4 4 0 3 1 5 4 5s4-1 6 0c-2 4-7 5-9 3 4 5 11 4 14-1 2-4 2-8 0-11 2 1 3 2 4 3 0-3-1-6-3-8z" fill="#ef6b17" />
            <path d="M27 4c5 6 5 15-1 21-3 3-6 4.500-9 5 9-5 12-13 10-26z" fill="#fbb829" />
          </svg>
        </TaskButton>
        <div className="flex">
          <TaskButton label="Проводник" className="w-[50px]">
            <svg width="34" height="32" viewBox="0 0 34 32">
              <path d="M2 6l2-3h8l1 2h8l1-2h8l2 3v21H2z" fill="#f3d983" stroke="#c9a547" strokeWidth=".8" />
              <path d="M5 3h5v3H5zM14 5h5v3h-5zM22 7h6v3h-6z" fill="#fff" />
              <path d="M5 3h3v2H5z" fill="#3aa544" />
              <path d="M14 5h3v2h-3z" fill="#d44a32" />
              <path d="M22 7h3v2h-3z" fill="#3b83d0" />
              <path d="M2 10h30v18H2z" fill="#fae7a1" />
              <path d="M6 30V20q0-2 2-2h18q2 0 2 2v10h-5v-7H11v7z" fill="#8ccdf0" stroke="#5a9fcb" strokeWidth=".7" />
            </svg>
          </TaskButton>
          <div className="h-[38px] w-[3px] rounded-r-[3px] border-r border-[#70757b] bg-[#1b1f23]" />
          <div className="h-[38px] w-[4px] rounded-r-[3px] border-r border-[#565b61] bg-[#14181c]" />
        </div>
      </div>
      <div className="ml-auto flex items-center text-[12px] text-white">
        <button type="button" className="mb-1 text-[11px]">EN</button>
        <button type="button" aria-label="Скрытые значки" className="ml-4">
          <svg width="8" height="4" viewBox="0 0 8 4"><path d="M4 0l4 4H0z" fill="#fff" /></svg>
        </button>
        <svg width="16" height="16" viewBox="0 0 16 16" className="ml-3" aria-hidden>
          <path d="M1 1h10v8H1z" fill="#e8361b" stroke="#7e1d10" />
          <path d="M5.500 5.500h10v7h-10z" fill="#58c22e" stroke="#dfe7dc" strokeWidth=".8" />
          <path d="M1 11h4v2H1zM8 14h5v1H8z" fill="#3d78c8" />
        </svg>
        <svg width="16" height="16" viewBox="0 0 16 16" className="ml-2.5" aria-hidden>
          <path d="M1 1h4v5l5-5h5L9 8l3 3v4H1z" fill="#fff" />
          <path d="M2 2h2v6l6-6h3L7 8l-5 6z" fill="#d9202a" />
          <path d="M8 9l6-1v6H9z" fill="#30353a" stroke="#d5d8db" strokeWidth=".7" />
        </svg>
        <svg width="16" height="16" viewBox="0 0 16 16" className="ml-2" aria-hidden fill="none" stroke="#fff">
          <path d="M4.500 5.500h10v7h-10zM7 14.500h6M10 12.500v2" />
          <path d="M1 1v3.500h4V1M3 4.500v9h2" strokeWidth="1.300" />
        </svg>
        <svg width="16" height="16" viewBox="0 0 16 16" className="ml-2" aria-hidden>
          <path d="M1 5h3l5-4v13l-5-4H1z" fill="#f2f4f5" />
          <circle cx="11" cy="11" r="4" fill="#fff" stroke="#dd1f1f" strokeWidth="2" />
          <path d="M8.500 8.500l5 5" stroke="#dd1f1f" strokeWidth="1.800" />
        </svg>
        <div className="ml-4 w-[56px] text-center text-[11px] leading-[17px]">
          <div>15:28</div>
          <div>06.05.2016</div>
        </div>
        <button type="button" aria-label="Свернуть все окна" className="ml-3 mr-px h-[38px] w-[13px] border border-[#5b6066] bg-linear-to-b from-[#70757a] to-[#12161a] to-50%" />
      </div>
    </footer>
  );
}

export default function App() {
  return (
    <div className="flex h-screen min-h-[600px] flex-col overflow-hidden bg-[#c4c7cc] font-['Noto_Sans',sans-serif] text-[11px] text-[#33373d]">
      <header className="shrink-0">
        <div className="bg-[radial-gradient(ellipse_190px_34px_at_40px_4px,#eaf2fb_0%,#eaf2fb00_100%),linear-gradient(to_bottom,#7aa6d8_0px,#96bde6_10px,#c9e0f8_24px,#f3f9ff_40px,#fdfeff_47px)]">
          <TitleBar />
          <Tabs />
        </div>
        <div className="flex h-[87px] border-t border-b border-t-[#b0b5bd] border-b-[#868b93] bg-linear-to-b from-white via-[#f8f9fa] via-60% to-[#e5e8ec]">
          <ClipboardGroup />
          <FontGroup />
          <ParagraphGroup />
          <StylesGroup />
          <EditingGroup />
        </div>
      </header>
      <main className="flex min-h-0 flex-1">
        <div className="flex w-6 shrink-0 flex-col bg-[#cdd0d6]">
          <div className="mt-[3px] flex h-6 w-[25px] items-center justify-center border border-[#868d97] bg-[#cdd0d6]">
            <button type="button" aria-label="Табуляция" className="flex size-[15px] items-center justify-center border border-[#868d97] bg-[#f7f8fa]">
              <svg width="6" height="6" viewBox="0 0 6 6"><path d="M1 0v5h5" fill="none" stroke="#333" strokeWidth="2" /></svg>
            </button>
          </div>
          <VerticalRuler />
        </div>
        <div className="flex min-w-0 flex-1 flex-col bg-linear-to-b from-[#cdd0d5] to-[#b8bbbf]">
          <HorizontalRuler />
          <Document />
        </div>
        <ScrollBar />
      </main>
      <StatusBar />
      <TaskBar />
    </div>
  );
}
